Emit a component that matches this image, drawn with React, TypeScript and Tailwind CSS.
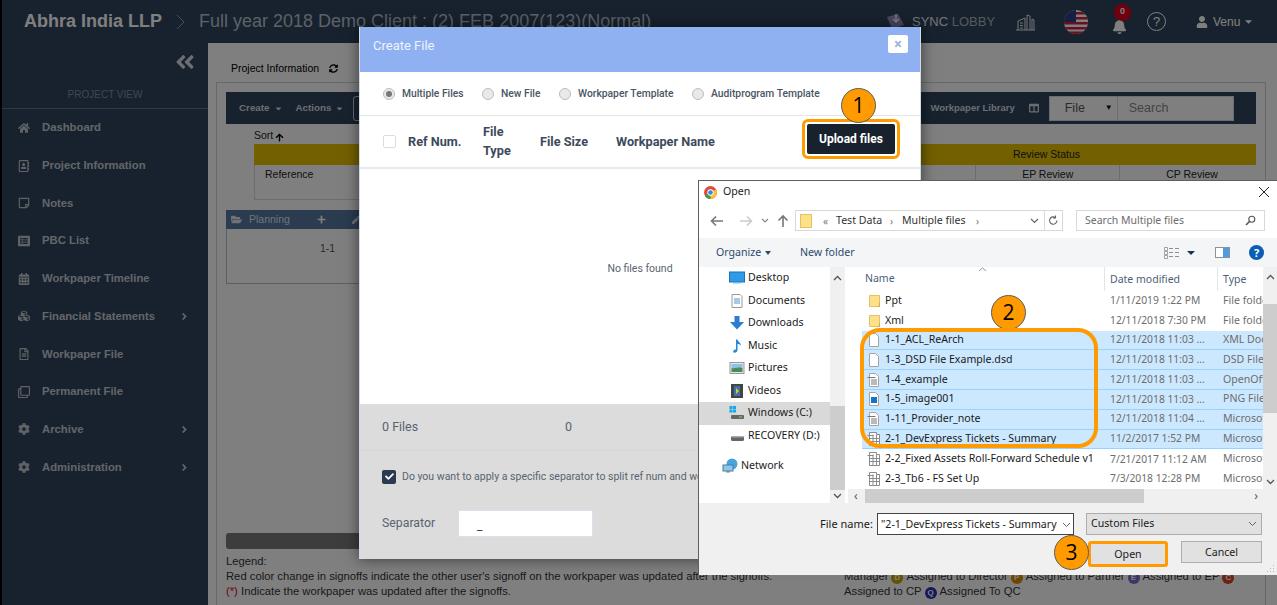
import React from "react";
import {
  FaHome, FaRegAddressBook, FaRegStickyNote, FaListAlt, FaCalendarAlt, FaCubes, FaRegFileAlt, FaRegClone, FaCog,
  FaAngleDoubleLeft, FaAngleRight, FaSyncAlt, FaArrowUp, FaFolderOpen, FaPlus, FaPen, FaUser, FaBell, FaCheck, FaCaretDown, FaColumns,
} from "react-icons/fa";

const navItems = [
  { label: "Dashboard", icon: FaHome },
  { label: "Project Information", icon: FaRegAddressBook },
  { label: "Notes", icon: FaRegStickyNote },
  { label: "PBC List", icon: FaListAlt },
  { label: "Workpaper Timeline", icon: FaCalendarAlt },
  { label: "Financial Statements", icon: FaCubes, more: true },
  { label: "Workpaper File", icon: FaRegFileAlt },
  { label: "Permanent File", icon: FaRegClone },
  { label: "Archive", icon: FaCog, more: true },
  { label: "Administration", icon: FaCog, more: true },
];

const files = [
  { name: "Ppt", date: "1/11/2019 1:22 PM", type: "File folder", icon: "folder" },
  { name: "Xml", date: "12/11/2018 7:30 PM", type: "File folder", icon: "folder" },
  { name: "1-1_ACL_ReArch", date: "12/11/2018 11:03 ...", type: "XML Document", icon: "blank", sel: true },
  { name: "1-3_DSD File Example.dsd", date: "12/11/2018 11:03 ...", type: "DSD File", icon: "blank", sel: true },
  { name: "1-4_example", date: "12/11/2018 11:03 ...", type: "OpenOffice", icon: "text", sel: true },
  { name: "1-5_image001", date: "12/11/2018 11:03 ...", type: "PNG File", icon: "image", sel: true },
  { name: "1-11_Provider_note", date: "12/11/2018 11:04 ...", type: "Microsoft", icon: "text", sel: true },
  { name: "2-1_DevExpress Tickets - Summary", date: "11/2/2017 1:52 PM", type: "Microsoft", icon: "sheet", sel: true },
  { name: "2-2_Fixed Assets Roll-Forward Schedule v1", date: "7/21/2017 11:12 AM", type: "Microsoft", icon: "sheet" },
  { name: "2-3_Tb6 - FS Set Up", date: "7/3/2018 12:28 PM", type: "Microsoft", icon: "sheet" },
];

const places = [
  { label: "Desktop", icon: "desktop" },
  { label: "Documents", icon: "documents" },
  { label: "Downloads", icon: "downloads" },
  { label: "Music", icon: "music" },
  { label: "Pictures", icon: "pictures" },
  { label: "Videos", icon: "videos" },
  { label: "Windows (C:)", icon: "c", active: true },
  { label: "RECOVERY (D:)", icon: "d" },
];

function FileIcon({ kind }: { kind: string }) {
  if (kind === "folder") {
    return (
      <svg width="14" height="14" viewBox="0 0 14 14">
        <path d="M1.5 1.5h10v11h-10z" fill="#fde08a" stroke="#e6c163" />
        <path d="M11.5 9v3.5H9.5" fill="none" stroke="#d9a93f" />
      </svg>
    );
  }
  return (
    <svg width="16" height="16" viewBox="0 0 16 16">
      {kind !== "sheet" && <path d="M3.5 1.5h6l3 3v10h-9z" fill="#fff" stroke="#a4a4a4" />}
      {kind === "text" && <path d="M1.5 5.5h8M5 8h6M5 10h6M5 12h6" stroke="#777" fill="none" />}
      {kind === "image" && <rect x="5" y="6" width="6" height="6" fill="#1673c9" />}
      {kind === "sheet" && (
        <path d="M1.5 4.5h6M3.5 1.5h7v2h3v11h-10zM3.5 7.5h10M3.5 10.5h10M7 3.5v11M10.5 3.5v11" fill="#fff" stroke="#8b8b8b" />
      )}
    </svg>
  );
}

function PlaceIcon({ kind }: { kind: string }) {
  return (
    <svg width="16" height="16" viewBox="0 0 16 16">
      {kind === "desktop" && <><rect x="0.5" y="2" width="15" height="10" fill="#2f9be8" stroke="#1f6fb4" /><rect x="4" y="12" width="8" height="1.5" fill="#7bb7e6" /></>}
      {kind === "documents" && <><path d="M3 1.5h8l2 2v11H3z" fill="#fff" stroke="#9a9a9a" /><path d="M5 6h6M5 8h6M5 10h6" stroke="#4f93c9" /></>}
      {kind === "downloads" && <path d="M5.5 1h5v6H15l-7 7.5L1 7h4.5z" fill="#2a7dd1" />}
      {kind === "music" && <path d="M7 1.5h1.5c.4 2.5 3.5 3 3.5 6-1-1.2-2.3-1.6-3.5-1.7V12c0 1.6-1.4 2.7-3 2.7S4 13.6 4.6 12.6c.6-1 1.7-1.2 2.4-.9z" fill="#1e88dc" />}
      {kind === "pictures" && <><rect x="1" y="2.5" width="14" height="11" fill="#dfe6ea" stroke="#999" /><path d="M2.5 4h11v4c-3-2-6 1-11 0z" fill="#8fc2e6" /><path d="M2.5 8c4 1 7-2 11 0v4h-11z" fill="#4c8a5d" /></>}
      {kind === "videos" && <><rect x="2" y="1" width="12" height="14" fill="#444" /><rect x="5" y="3" width="6" height="10" fill="#3d74a8" /><path d="M7 5l3 3-3 3z" fill="#e0c341" /></>}
      {kind === "c" && <><rect x="0.5" y="1" width="3" height="3" fill="#18a7e8" /><rect x="4" y="1" width="3" height="3" fill="#18a7e8" /><rect x="0.5" y="4.5" width="3" height="3" fill="#18a7e8" /><rect x="4" y="4.5" width="3" height="3" fill="#18a7e8" /><rect x="2" y="10" width="13" height="4" rx="1" fill="#666" /><rect x="10" y="11.5" width="3" height="1" fill="#7fd16a" /></>}
      {kind === "d" && <><rect x="2" y="8" width="13" height="5" rx="1.5" fill="#666" /><rect x="3" y="8" width="11" height="1.5" fill="#aaa" /></>}
    </svg>
  );
}

function Circle({ n, className }: { n: string; className: string }) {
  return (
    <div className={`absolute flex h-[35px] w-[35px] items-center justify-center rounded-full border border-[#5c5c5c] bg-[#ff9a00] font-['Open_Sans',sans-serif] text-[21px] leading-none text-black ${className}`}>
      {n}
    </div>
  );
}

function Badge({ c, color }: { c: string; color: string }) {
  return (
    <span className={`mx-[3px] inline-flex h-[12px] w-[12px] items-center justify-center rounded-full text-[8px] font-bold text-white ${color}`}>{c}</span>
  );
}

function Radio({ label, on, className }: { label: string; on?: boolean; className: string }) {
  return (
    <label className={`flex items-center ${className}`}>
      <span className="flex h-[12px] w-[12px] items-center justify-center rounded-full border border-[#bdbdbd] bg-[#e9e9e9]">
        {on && <span className="h-[6px] w-[6px] rounded-full bg-[#777]" />}
      </span>
      <span className="ml-[7px] whitespace-nowrap">{label}</span>
    </label>
  );
}

function Modal() {
  return (
    <div className="absolute left-[359px] top-[27px] flex h-[532px] w-[562px] flex-col border-x border-[#cfdbe8] bg-white font-['Roboto',sans-serif] shadow-[0_0_14px_rgba(0,0,0,0.55)]">
      <div className="flex h-[45px] shrink-0 items-start justify-between bg-[#8fb1f2] pl-[13px] pr-[12px] pt-[8px]">
        <span className="mt-[3px] text-[13px] leading-[16px] text-[#eef3fd]">Create File</span>
        <span className="flex h-[18px] w-[20px] items-center justify-center rounded-[2px] bg-white text-[14px] font-bold leading-none text-[#9db4d8]">×</span>
      </div>
      <div className="flex h-[44px] shrink-0 items-center border-b border-[#e6e6e6] pl-[23px] text-[10.3px] font-medium text-[#4b5563]">
        <Radio label="Multiple Files" on className="w-[99px]" />
        <Radio label="New File" className="w-[77px]" />
        <Radio label="Workpaper Template" className="w-[133px]" />
        <Radio label="Auditprogram Template" className="w-[140px]" />
      </div>
      <div className="relative flex h-[53px] shrink-0 items-center border-b-2 border-[#e8ebee] pl-[23px] text-[12.7px] font-bold text-[#3d4a5c]">
        <span className="h-[13px] w-[13px] rounded-[2px] border border-[#d5dde6] bg-white" />
        <span className="ml-[12px] w-[75px]">Ref Num.</span>
        <span className="-mt-[1px] w-[57px] leading-[19px]">File<br />Type</span>
        <span className="w-[76px]">File Size</span>
        <span>Workpaper Name</span>
        <div className="absolute left-[442px] top-[3px] rounded-[6px] border-[3px] border-[#ff9a00] p-[2px]">
          <button className="h-[30px] w-[88px] rounded-[2px] bg-[#18222e] text-[12px] font-bold text-white">Upload files</button>
        </div>
      </div>
      <div className="flex flex-1 justify-center pt-[92px] text-[10.5px] text-[#5b6470]">No files found</div>
      <div className="flex h-[155px] shrink-0 flex-col bg-[#dcdcdc] px-[22px] text-[#59636f]">
        <div className="-mx-[22px] flex h-[47px] items-center border-b border-[#cfd8e2] px-[22px] text-[12.5px]">
          <span className="w-[183px]">0 Files</span>
          <span>0</span>
        </div>
        <div className="mt-[18px] flex items-center whitespace-nowrap text-[10.5px]">
          <span className="flex h-[14px] w-[14px] items-center justify-center rounded-[2px] bg-[#2a3a50] text-[9px] text-white"><FaCheck /></span>
          <span className="ml-[6px]">Do you want to apply a specific separator to split ref num and workpaper name</span>
        </div>
        <div className="mt-[25px] flex items-center text-[12.3px]">
          <span className="w-[76px]">Separator</span>
          <div className="h-[27px] w-[135px] border border-[#d8e2ee] bg-white pl-[18px] pt-[8px] text-[12px] leading-[14px] text-[#444]">_</div>
        </div>
      </div>
    </div>
  );
}

function OpenDialog() {
  return (
    <div className="absolute left-[698px] top-[180px] flex h-[395px] w-[579px] flex-col overflow-hidden border-l border-t border-[#5f5f5f] bg-white font-['Noto_Sans',sans-serif] text-[10.6px] text-[#1a1a1a]">
      <div className="flex h-[22px] shrink-0 items-center pl-[5px] pr-[7px]">
        <svg width="13" height="13" viewBox="0 0 14 14">
          <circle cx="7" cy="7" r="7" fill="#dd4b3e" />
          <path d="M7 7L1 10.5A7 7 0 0 0 7 14z" fill="#2ea44f" />
          <path d="M7 7l6-3.5A7 7 0 0 1 7 14z" fill="#f6c22d" />
          <circle cx="7" cy="7" r="3.4" fill="#fff" />
          <circle cx="7" cy="7" r="2.5" fill="#3f83e8" />
        </svg>
        <span className="ml-[6px] flex-1">Open</span>
        <svg width="12" height="12" viewBox="0 0 12 12"><path d="M1 1l10 10M11 1L1 11" stroke="#222" strokeWidth="1" /></svg>
      </div>
      <div className="flex h-[35px] shrink-0 items-center pl-[11px] text-[#333]">
        <svg width="14" height="12" viewBox="0 0 14 12"><path d="M13 6H2M6 1.5L1.5 6 6 10.5" fill="none" stroke="#777" strokeWidth="1.6" /></svg>
        <svg className="ml-[15px]" width="14" height="12" viewBox="0 0 14 12"><path d="M1 6h11M8 1.5L12.5 6 8 10.5" fill="none" stroke="#ccc" strokeWidth="1.6" /></svg>
        <svg className="ml-[8px]" width="8" height="6" viewBox="0 0 8 6"><path d="M1 1l3 3 3-3" fill="none" stroke="#888" strokeWidth="1.2" /></svg>
        <svg className="ml-[8px]" width="12" height="14" viewBox="0 0 12 14"><path d="M6 13V2M1.5 6.5L6 2l4.500 4.500" fill="none" stroke="#777" strokeWidth="1.6" /></svg>
        <div className="ml-[6px] flex h-[21px] w-[268px] items-center border border-[#d9d9d9] pl-[4px]">
          <span className="h-[14px] w-[12px] border border-[#e6c163] bg-[#fde08a]" />
          <span className="ml-[11px] w-[13px] text-[10px] leading-none text-[#777]">«</span>
          <span className="w-[54px] whitespace-nowrap">Test Data</span>
          <span className="w-[12px] text-[10px] leading-none text-[#777]">›</span>
          <span className="w-[74px] whitespace-nowrap">Multiple files</span>
          <span className="text-[10px] leading-none text-[#777]">›</span>
          <span className="flex-1" />
          <svg width="9" height="6" viewBox="0 0 9 6"><path d="M1 1l3.500 3.500L8 1" fill="none" stroke="#666" strokeWidth="1.2" /></svg>
          <span className="ml-[5px] flex h-full w-[18px] items-center justify-center border-l border-[#d9d9d9]">
            <svg width="11" height="11" viewBox="0 0 11 11"><path d="M9 5.500A3.700 3.700 0 1 1 7.500 2.500M7.500 0.500v2.500H5" fill="none" stroke="#666" strokeWidth="1.1" /></svg>
          </span>
        </div>
        <div className="ml-[13px] flex h-[21px] w-[189px] items-center border border-[#d9d9d9] pl-[8px] pr-[8px] text-[10.5px] text-[#6d6d6d]">
          <span className="flex-1">Search Multiple files</span>
          <svg width="11" height="11" viewBox="0 0 11 11"><circle cx="6.800" cy="4.200" r="3" fill="none" stroke="#555" strokeWidth="1.1" /><path d="M4.800 6.200L1 10" stroke="#555" strokeWidth="1.600" /></svg>
        </div>
      </div>
      <div className="flex h-[29px] shrink-0 items-center bg-[#f4f5f7] pl-[17px] text-[#2c4a6b]">
        <span className="w-[44px]">Organize</span>
        <span className="ml-[5px] h-0 w-0 border-x-[3.500px] border-t-[4px] border-x-transparent border-t-[#2c4a6b]" />
        <span className="ml-[29px] w-[56px] whitespace-nowrap">New folder</span>
        <svg className="ml-[308px]" width="15" height="12" viewBox="0 0 15 12">
          <path d="M0.500 0.500h3v3h-3zM0.500 4.500h3v3h-3zM0.500 8.500h3v3h-3z" fill="#fff" stroke="#9aa0a6" />
          <path d="M5 1.500h4M11 1.500h4M5 5.500h4M11 5.500h4M5 9.500h4M11 9.500h4" stroke="#8c9198" />
        </svg>
        <span className="ml-[8px] h-0 w-0 border-x-[4px] border-t-[4px] border-x-transparent border-t-[#1c3050]" />
        <span className="ml-[20px] flex h-[11px] w-[15px] border border-[#8c9198]">
          <span className="flex-1 bg-white" />
          <span className="w-[6px] bg-[#4d9be0]" />
        </span>
        <span className="ml-[19px] flex h-[15px] w-[15px] items-center justify-center rounded-full bg-[#0a5fb4] text-[11px] font-bold leading-none text-white">?</span>
      </div>
      <div className="flex min-h-0 flex-1">
        <div className="w-[131px] shrink-0">
          {places.map((p) => (
            <div key={p.label} className={`flex h-[22.5px] items-center pl-[30px] ${p.active ? "bg-[#d9d9d9]" : ""}`}>
              <PlaceIcon kind={p.icon} />
              <span className="ml-[3px] whitespace-nowrap">{p.label}</span>
            </div>
          ))}
          <div className="mt-[8px] flex h-[22.5px] items-center pl-[23px]">
            <svg width="16" height="16" viewBox="0 0 16 16">
              <circle cx="10" cy="6" r="5.500" fill="#4ba3dc" />
              <rect x="1" y="7" width="10" height="6" fill="#8fc7ea" stroke="#3f7fb0" />
              <rect x="4" y="13" width="4" height="1.500" fill="#888" />
            </svg>
            <span className="ml-[3px]">Network</span>
          </div>
        </div>
        <div className="flex w-[15px] shrink-0 flex-col items-center justify-between bg-[#f0f0f0]">
          <svg className="mt-[8px]" width="9" height="6" viewBox="0 0 9 6"><path d="M1 5l3.500-3.500L8 5" fill="none" stroke="#555" strokeWidth="1.300" /></svg>
          <div className="mt-[122px] h-[84px] w-full bg-[#cdcdcd]" />
          <svg className="mb-[4px]" width="9" height="6" viewBox="0 0 9 6"><path d="M1 1l3.500 3.500L8 1" fill="none" stroke="#555" strokeWidth="1.300" /></svg>
        </div>
        <div className="ml-[3px] flex w-[415px] shrink-0 flex-col">
          <div className="relative flex h-[24px] shrink-0 items-center text-[10.5px] text-[#4c607a]">
            <span className="w-[256px] pl-[17px]">Name</span>
            <span className="h-full w-[113px] border-l border-[#e5e5e5] pl-[5px] leading-[24px]">Date modified</span>
            <span className="h-full border-l border-[#e5e5e5] pl-[5px] leading-[24px]">Type</span>
            <svg className="absolute left-[130px] top-0" width="9" height="5" viewBox="0 0 9 5"><path d="M1 4l3.500-3L8 4" fill="none" stroke="#999" /></svg>
          </div>
          {files.map((f) => (
            <div
              key={f.name}
              className={`ml-[14px] flex h-[19.800px] w-[401px] shrink-0 items-center overflow-hidden whitespace-nowrap ${f.sel ? "border-b border-[#99d1ff] bg-[#cce8ff]" : ""}`}
            >
              <span className="flex w-[23px] shrink-0 justify-end pr-[3px]"><FileIcon kind={f.icon} /></span>
              <span className="w-[219px] shrink-0 overflow-hidden">{f.name}</span>
              <span className="w-[113px] shrink-0 pl-[6px] text-[10.3px] text-[#6d6d6d]">{f.date}</span>
              <span className="pl-[6px] text-[#6d6d6d]">{f.type}</span>
            </div>
          ))}
          <div className="flex h-[14px] shrink-0 items-center bg-[#f0f0f0] text-[#555]">
            <span className="w-[17px] pl-[6px] text-[12px] leading-none">‹</span>
            <span className="h-full w-[279px] bg-[#cdcdcd]" />
            <span className="flex-1 pr-[5px] text-right text-[12px] leading-none">›</span>
          </div>
        </div>
        <div className="flex w-[14px] shrink-0 flex-col items-center bg-[#f0f0f0]">
          <svg className="mt-[7px]" width="9" height="6" viewBox="0 0 9 6"><path d="M1 5l3.500-3.500L8 5" fill="none" stroke="#555" strokeWidth="1.300" /></svg>
          <div className="mt-[24px] h-[109px] w-full bg-[#cdcdcd]" />
          <svg className="mt-[66px]" width="9" height="6" viewBox="0 0 9 6"><path d="M1 1l3.500 3.500L8 1" fill="none" stroke="#555" strokeWidth="1.300" /></svg>
        </div>
      </div>
      <div className="relative h-[72px] shrink-0 bg-[#f0f0f0]">
        <div className="mt-[10px] flex h-[22px] items-center pl-[121px]">
          <span className="w-[57px] whitespace-nowrap pt-[1px] text-[11px]">File name:</span>
          <div className="flex h-[22px] w-[197px] items-center overflow-hidden whitespace-nowrap border border-[#444] bg-white pl-[3px] pt-[1px]">
            <span className="w-[178px] overflow-hidden">"2-1_DevExpress Tickets - Summary</span>
            <svg className="ml-[3px]" width="9" height="6" viewBox="0 0 9 6"><path d="M1 1l3.500 3.500L8 1" fill="none" stroke="#666" /></svg>
          </div>
          <div className="ml-[12px] flex h-[22px] w-[176px] items-center justify-between border border-[#adadad] bg-[#e1e1e1] px-[4px]">
            <span>Custom Files</span>
            <svg width="9" height="6" viewBox="0 0 9 6"><path d="M1 1l3.500 3.500L8 1" fill="none" stroke="#666" /></svg>
          </div>
        </div>
        <div className="mt-[6px] flex items-start pl-[389px]">
          <div className="rounded-[3px] border-[3px] border-[#ff9a00]">
            <button className="h-[20px] w-[74px] bg-[#e1e1e1] leading-none">Open</button>
          </div>
          <button className="ml-[13px] h-[22px] w-[81px] border border-[#adadad] bg-[#e1e1e1] leading-none">Cancel</button>
        </div>
        <svg className="absolute bottom-[2px] right-[2px]" width="9" height="9" viewBox="0 0 9 9">
          <path d="M7 1h1v1H7zM4 4h1v1H4zM7 4h1v1H7zM1 7h1v1H1zM4 7h1v1H4zM7 7h1v1H7z" fill="#b5b5b5" />
        </svg>
      </div>
    </div>
  );
}

export default function App() {
  return (
    <div className="relative flex h-[605px] w-[1277px] overflow-hidden bg-white font-['Liberation_Sans',sans-serif]">
      <div className="w-[2px] shrink-0 bg-black" />
      <div className="flex min-w-0 flex-1 flex-col">
        {/* top bar */}
        <header className="flex h-[43px] shrink-0 items-center bg-[#30445c] pl-[22px] text-white">
          <span className="whitespace-nowrap text-[18px] font-bold">Abhra India LLP</span>
          <svg className="ml-[14px]" width="10" height="16" viewBox="0 0 10 16"><path d="M1 1l7 7-7 7" fill="none" stroke="#8fa0b4" /></svg>
          <span className="ml-[13px] w-[687px] whitespace-nowrap text-[18px] text-[#b9c3cf]">Full year 2018 Demo Client : (2) FEB 2007(123)(Normal)</span>
          <svg width="19" height="17" viewBox="0 0 19 17"><path d="M1 4l11-3 6 11-12 4z" fill="#9a8fc8" /><path d="M10 1v8M7 6l3 3 3-3" fill="none" stroke="#fff" strokeWidth="1.300" /></svg>
          <span className="ml-[7px] w-[78px] whitespace-nowrap text-[13px] text-[#e6e9ec]">SYNC <span className="text-[#aab2bc]">LOBBY</span></span>
          <svg className="ml-[25px]" width="21" height="18" viewBox="0 0 21 18">
            <path d="M1 17h19M3 17V8l7-3v12M12 17V2l3 1v14M17 17V6l2 1v10M5 10h3M5 12.500h3M5 15h3" fill="none" stroke="#e5e8ec" strokeWidth="1" />
          </svg>
          <svg className="ml-[28px]" width="24" height="24" viewBox="0 0 24 24">
            <defs><clipPath id="flag"><circle cx="12" cy="12" r="12" /></clipPath></defs>
            <g clipPath="url(#flag)">
              <rect width="24" height="24" fill="#fff" />
              <path d="M0 2h24v2.500H0zM0 7h24v2.500H0zM0 12h24v2.500H0zM0 17h24v2.500H0zM0 21.500h24V24H0z" fill="#d0213f" />
              <rect width="12" height="12" fill="#2b3f86" />
            </g>
          </svg>
          <div className="relative ml-[23px] flex h-[24px] w-[16px] items-end justify-center text-[15px] text-white">
            <FaBell />
            <span className="absolute left-[3px] -top-[6px] flex h-[17px] w-[17px] items-center justify-center rounded-full bg-[#e0001c] text-[9px] font-bold">0</span>
          </div>
          <span className="ml-[20px] flex h-[19px] w-[19px] items-center justify-center rounded-full border-[1.500px] border-white text-[13px] leading-none">?</span>
          <FaUser className="ml-[30px] text-[12px]" />
          <span className="ml-[5px] text-[12px]">Venu</span>
          <FaCaretDown className="ml-[3px] text-[11px]" />
        </header>
        <div className="flex min-h-0 flex-1">
          {/* sidebar */}
          <aside className="flex w-[206px] shrink-0 flex-col bg-[#30445c]">
            <div className="flex h-[38px] shrink-0 items-center justify-end pr-[12px] text-[22px] text-[#d8dde3]"><FaAngleDoubleLeft /></div>
            <div className="mt-[5px] h-[23px] shrink-0 border-b border-[#5d738c] text-center text-[10px] leading-[17px] text-[#7d8ea2]">PROJECT VIEW</div>
            <nav>
              {navItems.map((item) => (
                <div key={item.label} className="flex h-[37.700px] items-center pl-[16px] pr-[18px] text-[11.3px] font-bold text-[#c6ccd3]">
                  <item.icon className="w-[12px] text-[12px] text-[#bfc6cd]" />
                  <span className="ml-[12px] flex-1 whitespace-nowrap">{item.label}</span>
                  {item.more && <FaAngleRight className="text-[11px]" />}
                </div>
              ))}
            </nav>
          </aside>
          {/* main */}
          <main className="flex min-w-0 flex-1 flex-col pl-[8px] pr-[11px] text-[#222]">
            <div className="flex h-[39px] shrink-0 items-center pl-[15px] pt-[12px] text-[10.500px] text-black">
              <span>Project Information</span>
              <FaSyncAlt className="ml-[10px] text-[9px]" />
            </div>
            <div className="flex min-h-0 flex-1 flex-col border-x border-t border-[#c9d2db] px-[9px] pt-[9px]">
              <div className="flex h-[32px] shrink-0 items-center bg-[#30445c] pl-[13px] text-[9.800px] font-bold text-[#d5dbe2]">
                <span>Create</span><FaCaretDown className="ml-[4px] text-[9px]" />
                <span className="ml-[13px]">Actions</span><FaCaretDown className="ml-[4px] text-[9px]" />
                <span className="ml-[9px] h-[25px] w-[30px] rounded-l-[3px] border border-[#d5dbe2]" />
                <span className="ml-[547px] whitespace-nowrap text-[9.500px]">Workpaper Library</span>
                <FaColumns className="ml-[14px] text-[10px]" />
                <div className="ml-[10px] flex h-[25px] w-[185px] border border-[#d5dbe2] bg-white text-[12.500px] font-normal text-[#555]">
                  <span className="flex w-[68px] items-center justify-between border-r border-[#d5dbe2] pl-[15px] pr-[4px]">File<span className="text-[8px] text-[#111]">▼</span></span>
                  <span className="flex flex-1 items-center pl-[11px] text-[#888]">Search</span>
                </div>
              </div>
              <div className="ml-[28px] flex h-[20px] shrink-0 items-end text-[10.500px]">Sort<FaArrowUp className="mb-[2px] ml-[2px] text-[9px] text-black" /></div>
              <div className="ml-[28px] flex h-[21px] shrink-0 items-center justify-center bg-[#e6c000] pl-[583px] pt-[1px] text-[10.500px]">Review Status</div>
              <div className="ml-[28px] flex h-[35px] shrink-0 border-b border-l border-[#d8d8d8] text-[10.500px] text-[#222]">
                <span className="w-[721px] pl-[10px] pt-[2px]">Reference</span>
                <span className="w-[144px] border-l border-[#d8d8d8] pt-[2px] text-center">EP Review</span>
                <span className="w-[137px] border-l border-[#d8d8d8] pt-[2px] pl-[8px] text-center">CP Review</span>
              </div>
              <div className="mt-[10px] flex h-[19px] shrink-0 items-center bg-[#5676a0] pl-[5px] text-[10.500px] text-[#dfe5ec]">
                <FaFolderOpen className="text-[11px]" />
                <span className="ml-[7px]">Planning</span>
                <FaPlus className="ml-[27px] text-[9px] text-white" />
                <FaPen className="ml-[26px] text-[8px]" />
              </div>
              <div className="h-[55px] shrink-0 border-x border-b border-[#b9c0c8] pl-[93px] pt-[12px] text-[10.500px] text-[#555]">1-1</div>
              <div className="flex-1" />
              <div className="h-[16px] w-[900px] shrink-0 rounded-[3px] bg-[#7a7a7a]" />
              <div className="flex h-[56px] shrink-0 whitespace-nowrap text-[11.250px] leading-[15px] text-[#333]">
                <div className="w-[618px] pt-[5px]">
                  <div>Legend:</div>
                  <div>Red color change in signoffs indicate the other user's signoff on the workpaper was updated after the signoffs.</div>
                  <div><span className="text-[#d9002a]">(*)</span> Indicate the workpaper was updated after the signoffs.</div>
                </div>
                <div className="pt-[20px]">
                  <div>Manager<Badge c="D" color="bg-[#c9a400]" />Assigned to Director<Badge c="P" color="bg-[#e08a00]" />Assigned to Partner<Badge c="E" color="bg-[#7a6fd0]" />Assigned to EP<Badge c="C" color="bg-[#d8462b]" /></div>
                  <div>Assigned to CP<Badge c="Q" color="bg-[#2f2fb8]" />Assigned To QC</div>
                </div>
              </div>
            </div>
          </main>
        </div>
      </div>
      {/* backdrop */}
      <div className="absolute inset-0 bg-black/50" />
      <Modal />
      <OpenDialog />
      {/* annotations */}
      <Circle n="1" className="left-[841px] top-[88px]" />
      <Circle n="2" className="left-[991px] top-[295px]" />
      <Circle n="3" className="left-[1054px] top-[535px]" />
      <div className="absolute left-[860px] top-[328px] h-[120px] w-[238px] rounded-[20px] border-[4px] border-[#ff9a00]" />
    </div>
  );
}
